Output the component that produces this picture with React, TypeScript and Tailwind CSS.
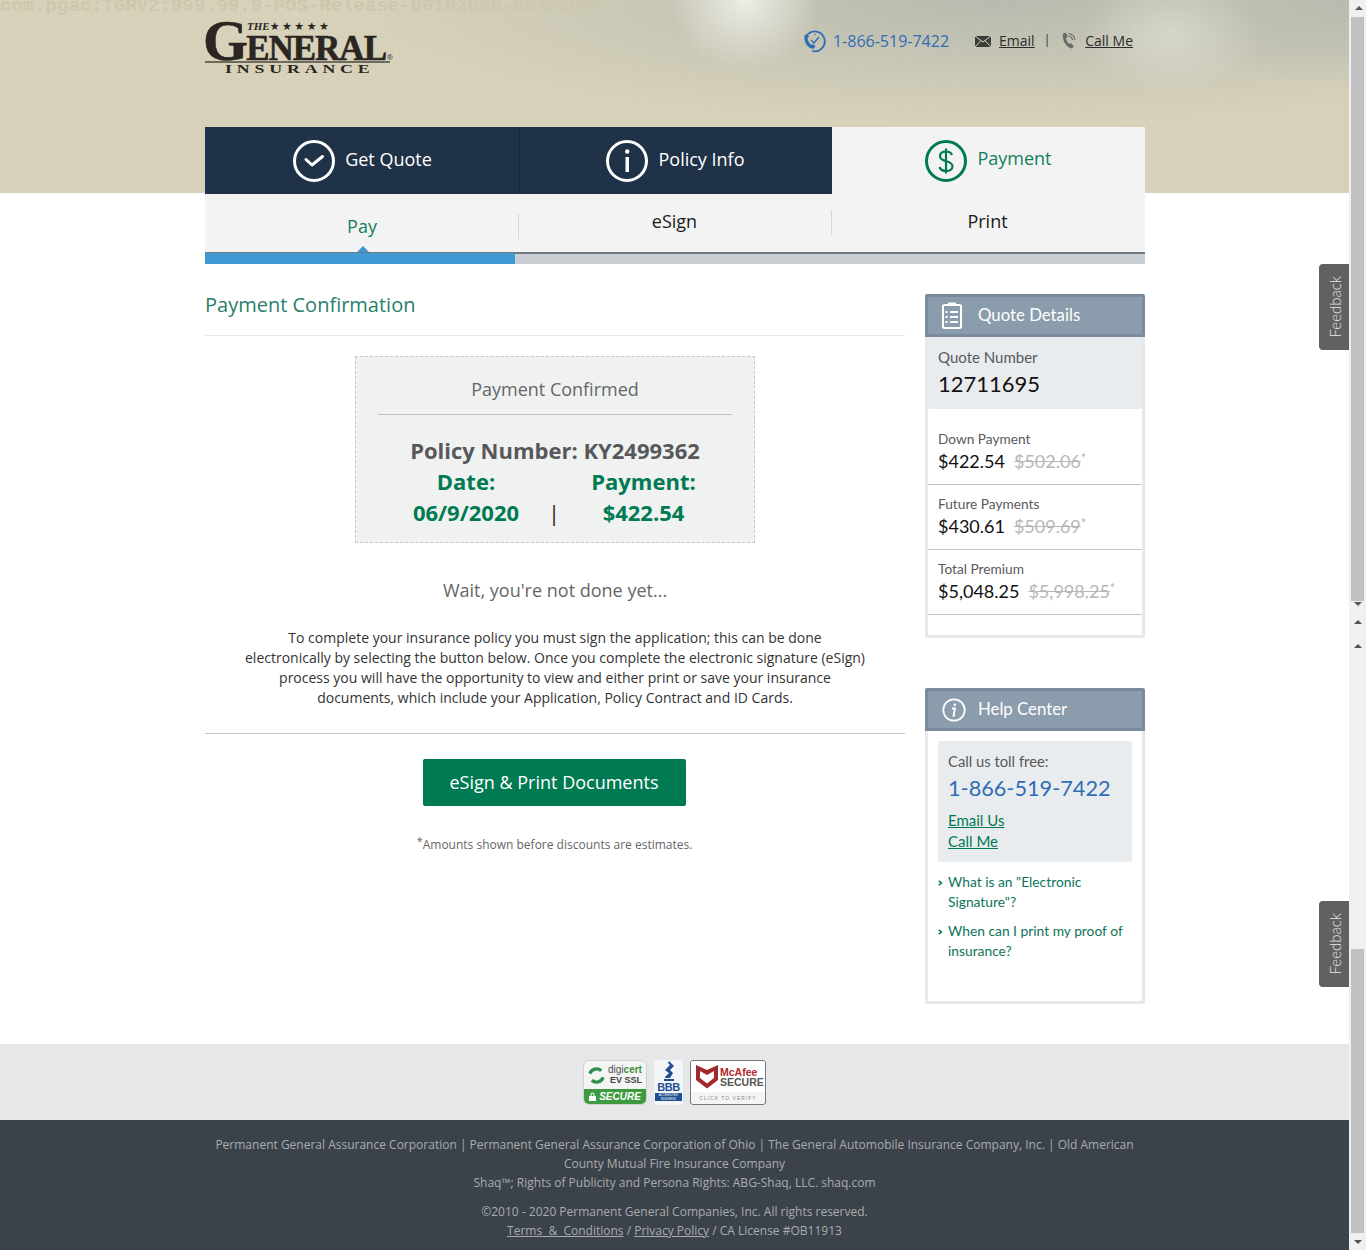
import React from 'react';

const GREEN = 'text-[#007a53]';

function CircleCheck() {
    return (
        <svg width="44" height="44" viewBox="0 0 44 44" fill="none" stroke="#fff">
            <circle cx="22" cy="22" r="19.5" strokeWidth="3" />
            <path d="M14 20.500l6 5.500 10.500-8.500" strokeWidth="3" strokeLinecap="round" strokeLinejoin="round" />
        </svg>
    );
}

function CircleInfo() {
    return (
        <svg width="44" height="44" viewBox="0 0 44 44" fill="none" stroke="#fff">
            <circle cx="22" cy="22" r="19.5" strokeWidth="3" />
            <rect x="20.5" y="18" width="3.500" height="15" fill="#fff" stroke="none" />
            <circle cx="22.200" cy="12.500" r="2.200" fill="#fff" stroke="none" />
        </svg>
    );
}

function CircleDollar() {
    return (
        <svg width="44" height="44" viewBox="0 0 44 44" fill="none" stroke="#007a53">
            <circle cx="22" cy="22" r="19.5" strokeWidth="3" />
            <path d="M28 16c-1-2.500-3.500-3.500-6-3.500-3.500 0-6 1.800-6 4.800 0 6.500 12.500 3.500 12.500 10 0 3-2.800 4.700-6.300 4.700-3 0-5.700-1.300-6.700-4M22 9.500v25" strokeWidth="2.200" />
        </svg>
    );
}

function ClockPhone() {
    return (
        <svg width="24" height="24" viewBox="0 0 24 24" fill="none" stroke="#2f6db5">
            <path d="M5 5a10 10 0 1 1 4 17" strokeWidth="1.800" />
            <path d="M8 11l3 3 5-6M12 5v1" strokeWidth="1.400" />
            <path d="M1.500 6.500l3-2 1.500 3-1.500 1.500c.3 2.500 1.500 5 4 7l2-1 2 2.500-2.500 2.500C4 19 .5 12 1.500 6.500z" fill="#2f6db5" stroke="none" />
        </svg>
    );
}

function Envelope() {
    return (
        <svg width="16" height="11" viewBox="0 0 16 11">
            <rect width="16" height="11" fill="#3c3c38" />
            <path d="M0 0l8 6 8-6M0 11l6-6.500M16 11l-6-6.500" fill="none" stroke="#d3d1c2" strokeWidth="1" />
        </svg>
    );
}

function PhoneIcon() {
    return (
        <svg width="18" height="18" viewBox="0 0 16 18" fill="none">
            <path d="M2 1.500L5 .8l1.800 4-1.800 1.400c.4 2 1.500 4 3.500 5.800l1.800-.8 2.700 3.400-2.500 2C5 15 .8 8 2 1.500z" fill="#6a6c68" />
            <path d="M7.500 1.500c3.500.5 6 3 6.500 6.500M7.500 4c2 .3 3.700 2 4 4" stroke="#6a6c68" strokeWidth="1.200" />
        </svg>
    );
}

function Clipboard() {
    return (
        <svg width="20" height="28" viewBox="0 0 20 28" fill="none" stroke="#fff" strokeWidth="2" className="mr-[2px] -mt-[1px]">
            <rect x="1" y="4" width="18" height="23" rx="1.500" />
            <path d="M7 4V2.500h6V4" />
            <path d="M8 11h8M8 16h8M8 21h8M3.500 11h2M3.500 16h2M3.500 21h2" />
        </svg>
    );
}

function HelpInfo() {
    return (
        <svg width="24" height="24" viewBox="0 0 24 24" fill="none" className="ml-[1px]">
            <circle cx="12" cy="12" r="10.700" stroke="#fff" strokeWidth="1.800" />
            <path d="M10 10.500h3l-1.500 7h1.500" stroke="#fff" strokeWidth="1.800" />
            <circle cx="12.800" cy="6.800" r="1.300" fill="#fff" />
        </svg>
    );
}

function Chevron() {
    return (
        <svg width="5" height="6" viewBox="0 0 5 6" fill="none" stroke="#0c7459" strokeWidth="1.500" className="absolute left-0 top-[8px]">
            <path d="M.8.800L3.500 3 .8 5.200" />
        </svg>
    );
}

function Logo() {
    return (
        <div className="relative w-[190px] h-[56px] font-['Liberation_Serif',serif] text-[#2b2622]">
            <div className="flex items-baseline font-bold h-[41px] leading-[41px] -ml-[2px] [-webkit-text-stroke:0.6px_#2b2622]">
                <span className="text-[58px] tracking-[-2px]">G</span>
                <span className="text-[35px] tracking-[-1px]">ENERAL</span>
                <span className="text-[8px] ml-[1px] font-['Liberation_Sans',sans-serif] font-normal [-webkit-text-stroke:0px]">®</span>
            </div>
            <div className="absolute left-[42px] top-[-1px] flex items-center h-[14px]">
                <span className="text-[11px] font-bold italic leading-none">THE</span>
                <span className="text-[11px] tracking-[2.500px] font-['DejaVu_Sans',sans-serif] leading-none">★★★★★</span>
            </div>
            <div className="h-[2px] w-[185px] bg-[#6e6a5e]" />
            <div className="text-[12px] font-bold leading-[12px] tracking-[3.300px] ml-[20px] origin-left scale-x-[1.48] whitespace-nowrap">INSURANCE</div>
        </div>
    );
}

function TopTab({ icon, label, active, border, width, extra }: any) {
    return (
        <div className={`h-[67px] flex items-center justify-center gap-[9px] ${width} ${extra || ''} ${active ? 'bg-[#f3f3f3]' : 'bg-[#203247]'} ${border ? 'border-r border-[#162636]' : ''}`}>
            {icon}
            <span className={`text-[18px] ${active ? 'text-[#118060] mr-[1px] -mt-[4px]' : 'text-white -mt-[2px]'}`}>{label}</span>
        </div>
    );
}

function PriceRow({ label, price, old, first }: any) {
    return (
        <div className={`border-b border-[#c2c5c7] px-[10px] ${first ? 'pt-[20px] h-[76px]' : 'pt-[9px] h-[65px]'}`}>
            <div className="text-[13.700px] leading-[20px] text-[#58595b]">{label}</div>
            <div className="flex gap-[9px] text-[18px] leading-[24px] text-[#111]">
                <span>{price}</span>
                <span className="text-[#b5b7b8]"><span className="line-through">{old}</span><sup className="text-[13px] relative -top-[5px] align-baseline">*</sup></span>
            </div>
        </div>
    );
}

function PanelHeader({ icon, title }: any) {
    return (
        <div className="h-[43px] bg-[#8b9cac] border-[3px] border-[#7b8b9c] rounded-t-[2px] flex items-center text-white text-[16.800px]">
            <div className="w-[50px] flex justify-center">{icon}</div>
            <span className="-mt-[2px]">{title}</span>
        </div>
    );
}

function Badges() {
    return (
        <div className="flex items-start justify-center gap-[7px] font-['Liberation_Sans',sans-serif]">
            <div className="w-[64px] h-[45px] rounded-[6px] bg-[#f4f5f2] border border-[#d0d2cc] overflow-hidden flex flex-col">
                <div className="flex-1 flex items-center pl-[3px] gap-[2px]">
                    <svg width="19" height="19" viewBox="0 0 20 20" fill="none" stroke="#2f8f4a" strokeWidth="3.500">
                        <path d="M3 8a7.500 7.500 0 0 1 12-3M17 12a7.500 7.500 0 0 1-12 3" />
                    </svg>
                    <div className="text-right leading-[10px] -mt-[1px]">
                        <div className="text-[10px] text-[#4b4f50]">digi<span className="font-bold text-[#3b8e3d]">cert</span></div>
                        <div className="text-[9px] font-bold text-[#444]">EV SSL</div>
                    </div>
                </div>
                <div className="h-[15px] bg-[#3d9a3f] text-white text-[10px] font-bold italic leading-[15px] flex items-center justify-center gap-[3px]">
                    <svg width="7" height="9" viewBox="0 0 7 9" fill="#fff">
                        <path d="M0 4h7v5H0zM1.500 4V2.500a2 2 0 0 1 4 0V4h-1V2.500a1 1 0 0 0-2 0V4z" />
                    </svg>
                    SECURE
                </div>
            </div>
            <div className="w-[29px] h-[45px] rounded-[2px] bg-[#f4f5f8] flex flex-col items-center">
                <svg width="14" height="21" viewBox="0 0 14 21" fill="#1d4f91" className="mt-[1px]">
                    <path d="M7 0l5 5-4 4 3 3-3 5H3v-1l4-4-4-3 5-5-2-2zM2 18h10v2H2z" />
                </svg>
                <div className="text-[11px] font-bold text-[#1d4f91] leading-[10px] tracking-[-0.500px]">BBB</div>
                <div className="w-[27px] h-[8px] bg-[#1d4f91] text-white text-[3px] leading-[4px] text-center mt-[1px]">ACCREDITED BUSINESS</div>
            </div>
            <div className="w-[76px] h-[45px] rounded-[3px] bg-[#f5f5f5] border border-[#77797b] flex flex-col">
                <div className="flex items-center pl-[5px] gap-[2px] h-[31px] bg-white rounded-t-[3px]">
                    <svg width="22" height="25" viewBox="0 0 22 25" fill="#a3282c">
                        <path d="M0 1l11 5 11-5v15l-11 8.500L0 16zM4 7v7l7 5.500 7-5.500V7l-7 4z" />
                    </svg>
                    <div className="leading-[10px]">
                        <div className="text-[10.500px] font-bold text-[#b1272c]">McAfee</div>
                        <div className="text-[10.500px] font-bold text-[#555]">SECURE</div>
                    </div>
                </div>
                <div className="text-[5px] tracking-[1px] text-[#888] text-center leading-[12px]">CLICK TO VERIFY</div>
            </div>
        </div>
    );
}

function Feedback() {
    return (
        <div className="w-[30px] h-[86px] bg-[#616161] rounded-l-[4px] flex items-center justify-center pl-[2px]">
            <span className="[writing-mode:vertical-rl] rotate-180 text-[15px] text-[#e8e8e8] font-['Lato',sans-serif] font-light">Feedback</span>
        </div>
    );
}

function Arrow({ up }: any) {
    return <div className={`w-0 h-0 border-x-[4px] border-x-transparent ${up ? 'border-b-[4px] border-b-[#555]' : 'border-t-[4px] border-t-[#555]'}`} />;
}

export default function App() {
    return (
        <div className="relative w-[1366px] h-[1250px] overflow-hidden bg-white font-['Open_Sans',sans-serif]">
            <div className="w-[1349px]">
                <header className="relative h-[193px] bg-[#d8d2bb] bg-[repeating-linear-gradient(90deg,rgba(0,0,0,0.012)_0_1px,transparent_1px_3px),radial-gradient(ellipse_75px_70px_at_745px_0px,#f4f3eee0,transparent),radial-gradient(ellipse_90px_60px_at_1170px_35px,#dfe0d6b0,transparent),radial-gradient(ellipse_200px_90px_at_1349px_0px,#b8bbb0,transparent),radial-gradient(ellipse_650px_125px_at_1000px_0px,#b8bbb0,transparent)]">
                    <div className="absolute left-0 top-[-6px] text-[19px] font-bold font-['Liberation_Mono',monospace] text-[#cdc7ae] leading-[24px] whitespace-nowrap">com.pgac:TGRV2:999.99.9-POS-Release-06102020-SNAPSHOT</div>
                    <div className="relative ml-[205px] w-[940px]">
                        <div className="h-[127px] pt-[20px] flex justify-between">
                            <Logo />
                            <div className="flex items-center h-[24px] mt-[9px] mr-[12px] text-[14px]">
                                <ClockPhone />
                                <span className="text-[16px] text-[#2f6db5] ml-[6px] mr-[26px]">1-866-519-7422</span>
                                <Envelope />
                                <a className="underline text-[#2b2b2b] ml-[8px] -mt-[2px]">Email</a>
                                <span className="ml-[9px] mr-[10px] text-[#2b2b2b] text-[12px] -mt-[2px]">|</span>
                                <PhoneIcon />
                                <a className="underline text-[#2b2b2b] ml-[7px] -mt-[2px]">Call Me</a>
                            </div>
                        </div>
                        <div className="flex w-[940px]">
                            <TopTab icon={<CircleCheck />} label="Get Quote" border width="w-[315px]" />
                            <TopTab icon={<CircleInfo />} label="Policy Info" width="w-[312px]" extra="pr-[2px]" />
                            <TopTab icon={<CircleDollar />} label="Payment" active width="w-[313px]" />
                        </div>
                        <div className="flex w-[940px] h-[58px] bg-[#f3f3f3] text-[18px] text-[#1a1a1a]">
                            <div className="w-[314px] flex items-center justify-center relative pt-[6px] text-[#118060]">
                                Pay
                                <div className="absolute right-0 top-[20px] h-[25px] w-px bg-[#d5d7d7]" />
                            </div>
                            <div className="w-[313px] flex items-center justify-center relative pb-[4px] pr-[2px]">
                                eSign
                                <div className="absolute right-0 top-[16px] h-[25px] w-px bg-[#d5d7d7]" />
                            </div>
                            <div className="flex-1 flex items-center justify-center pb-[4px] pr-[2px]">Print</div>
                        </div>
                        <div className="relative flex w-[940px] h-[12px] bg-[#c9ced3] border-t-2 border-[#6f7a85]">
                            <div className="w-[310px] -mt-[1px] h-[11px] bg-[#3f99d3]" />
                            <div className="absolute left-[152px] top-[-8px] w-0 h-0 border-x-[6px] border-x-transparent border-b-[6px] border-b-[#3f99d3]" />
                        </div>
                    </div>
                </header>

                <main className="ml-[205px] w-[940px] h-[851px] pt-[101px] flex justify-between">
                    <div className="w-[700px]">
                        <h1 className="text-[20px] leading-[24px] -mt-[1px] text-[#28806a] pb-[18px] border-b border-[#e6e6e6]">Payment Confirmation</h1>
                        <div className="w-[400px] h-[187px] mx-auto mt-[20px] bg-[#eff2f1] border border-dashed border-[#c8c8c8] px-[22px] text-center">
                            <div className="text-[18px] leading-[24px] text-[#666] pt-[20px] pb-[13px] border-b border-[#bfc1c1]">Payment Confirmed</div>
                            <div className="text-[22px] leading-[31px] font-bold text-[#58585a] pt-[20px]">Policy Number: KY2499362</div>
                            <div className={`flex text-[22px] leading-[31px] font-bold ${GREEN}`}>
                                <div className="w-[176px]">Date:<br />06/9/2020</div>
                                <div className="w-[1px] relative"><span className="absolute left-[-6px] top-[31px] font-normal text-[#3a1a1a]">|</span></div>
                                <div className="w-[177px]">Payment:<br />$422.54</div>
                            </div>
                        </div>
                        <div className="text-[18px] leading-[24px] text-[#666] text-center mt-[35px]">Wait, you're not done yet...</div>
                        <p className="w-[650px] mx-auto text-[14px] leading-[20px] text-[#333] text-center mt-[26px]">
                            To complete your insurance policy you must sign the application; this can be done<br />
                            electronically by selecting the button below. Once you complete the electronic signature (eSign)<br />
                            process you will have the opportunity to view and either print or save your insurance<br />
                            documents, which include your Application, Policy Contract and ID Cards.
                        </p>
                        <div className="border-t border-[#c4c4c4] mt-[25px] pt-[25px] flex justify-center">
                            <button className="w-[263px] h-[47px] mr-[2px] bg-[#007a53] rounded-[2px] text-white text-[18px]">eSign &amp; Print Documents</button>
                        </div>
                        <p className="text-[12px] leading-[16px] text-[#666] text-center mt-[31px] pr-[1px]"><sup className="text-[11px] align-baseline relative -top-[4px]">*</sup>Amounts shown before discounts are estimates.</p>
                    </div>

                    <aside className="w-[220px] font-['Lato',sans-serif]">
                        <PanelHeader icon={<Clipboard />} title="Quote Details" />
                        <div className="border-x-[3px] border-b-[3px] border-[#e5e9ec] h-[301px]">
                            <div className="h-[72px] bg-[#e9ecee] px-[10px] pt-[10px] rounded-b-[2px]">
                                <div className="text-[15px] leading-[20px] text-[#58595b]">Quote Number</div>
                                <div className="text-[22px] leading-[28px] text-[#111] mt-[3px]">12711695</div>
                            </div>
                            <PriceRow first label="Down Payment" price="$422.54" old="$502.06" />
                            <PriceRow label="Future Payments" price="$430.61" old="$509.69" />
                            <PriceRow label="Total Premium" price="$5,048.25" old="$5,998.25" />
                        </div>

                        <div className="mt-[50px]">
                            <PanelHeader icon={<HelpInfo />} title="Help Center" />
                            <div className="border-x-[3px] border-b-[3px] border-[#e5e9ec] h-[273px] px-[10px] pt-[10px]">
                                <div className="h-[121px] bg-[#e9ecee] rounded-[2px] px-[10px] pt-[10px]">
                                    <div className="text-[14.800px] leading-[20px] text-[#58595b]">Call us toll free:</div>
                                    <div className="text-[21.700px] leading-[28px] text-[#2f6db5] mt-[3px] whitespace-nowrap">1-866-519-7422</div>
                                    <div className="text-[15px] leading-[21px] text-[#007a53] underline mt-[8px]">Email Us</div>
                                    <div className="text-[15px] leading-[21px] text-[#007a53] underline">Call Me</div>
                                </div>
                                <div className="relative text-[13.800px] leading-[20px] text-[#0c7459] pl-[10px] mt-[10px]">
                                    <Chevron />
                                    What is an "Electronic Signature"?
                                </div>
                                <div className="relative text-[13.800px] leading-[20px] text-[#0c7459] pl-[10px] mt-[9px]">
                                    <Chevron />
                                    When can I print my proof of insurance?
                                </div>
                            </div>
                        </div>
                    </aside>
                </main>

                <div className="h-[76px] bg-[#e6e7e9] pt-[16px]">
                    <Badges />
                </div>
                <footer className="h-[130px] bg-[#3c424a] pt-[15px] text-[12px] leading-[19px] text-[#a8acaf] text-center">
                    <div className="w-[940px] ml-[205px] pr-[1px]">
                        <p>Permanent General Assurance Corporation | Permanent General Assurance Corporation of Ohio | The General Automobile Insurance Company, Inc. | Old American County Mutual Fire Insurance Company</p>
                        <p>Shaq™; Rights of Publicity and Persona Rights: ABG-Shaq, LLC. shaq.com</p>
                        <p className="mt-[10px]">©2010 - 2020 Permanent General Companies, Inc. All rights reserved.</p>
                        <p><a className="underline">Terms &nbsp;&amp;&nbsp; Conditions</a> / <a className="underline">Privacy Policy</a> / CA License #OB11913</p>
                    </div>
                </footer>
            </div>

            <div className="absolute right-[17px] top-[264px]"><Feedback /></div>
            <div className="absolute right-[17px] top-[901px]"><Feedback /></div>

            <div className="absolute right-0 top-0 w-[17px] h-[1250px] bg-[#f0f0f0]">
                <div className="absolute left-[6px] top-[6px]"><Arrow up /></div>
                <div className="absolute left-[2px] top-[17px] w-[13px] h-[584px] bg-[#c1c1c1]" />
                <div className="absolute left-[5px] top-[602px]"><Arrow /></div>
                <div className="absolute left-[5px] top-[620px]"><Arrow up /></div>
                <div className="absolute left-[5px] top-[644px]"><Arrow up /></div>
                <div className="absolute left-[2px] top-[949px] w-[13px] h-[284px] bg-[#c1c1c1]" />
                <div className="absolute left-[5px] top-[1240px]"><Arrow /></div>
            </div>
        </div>
    );
}
